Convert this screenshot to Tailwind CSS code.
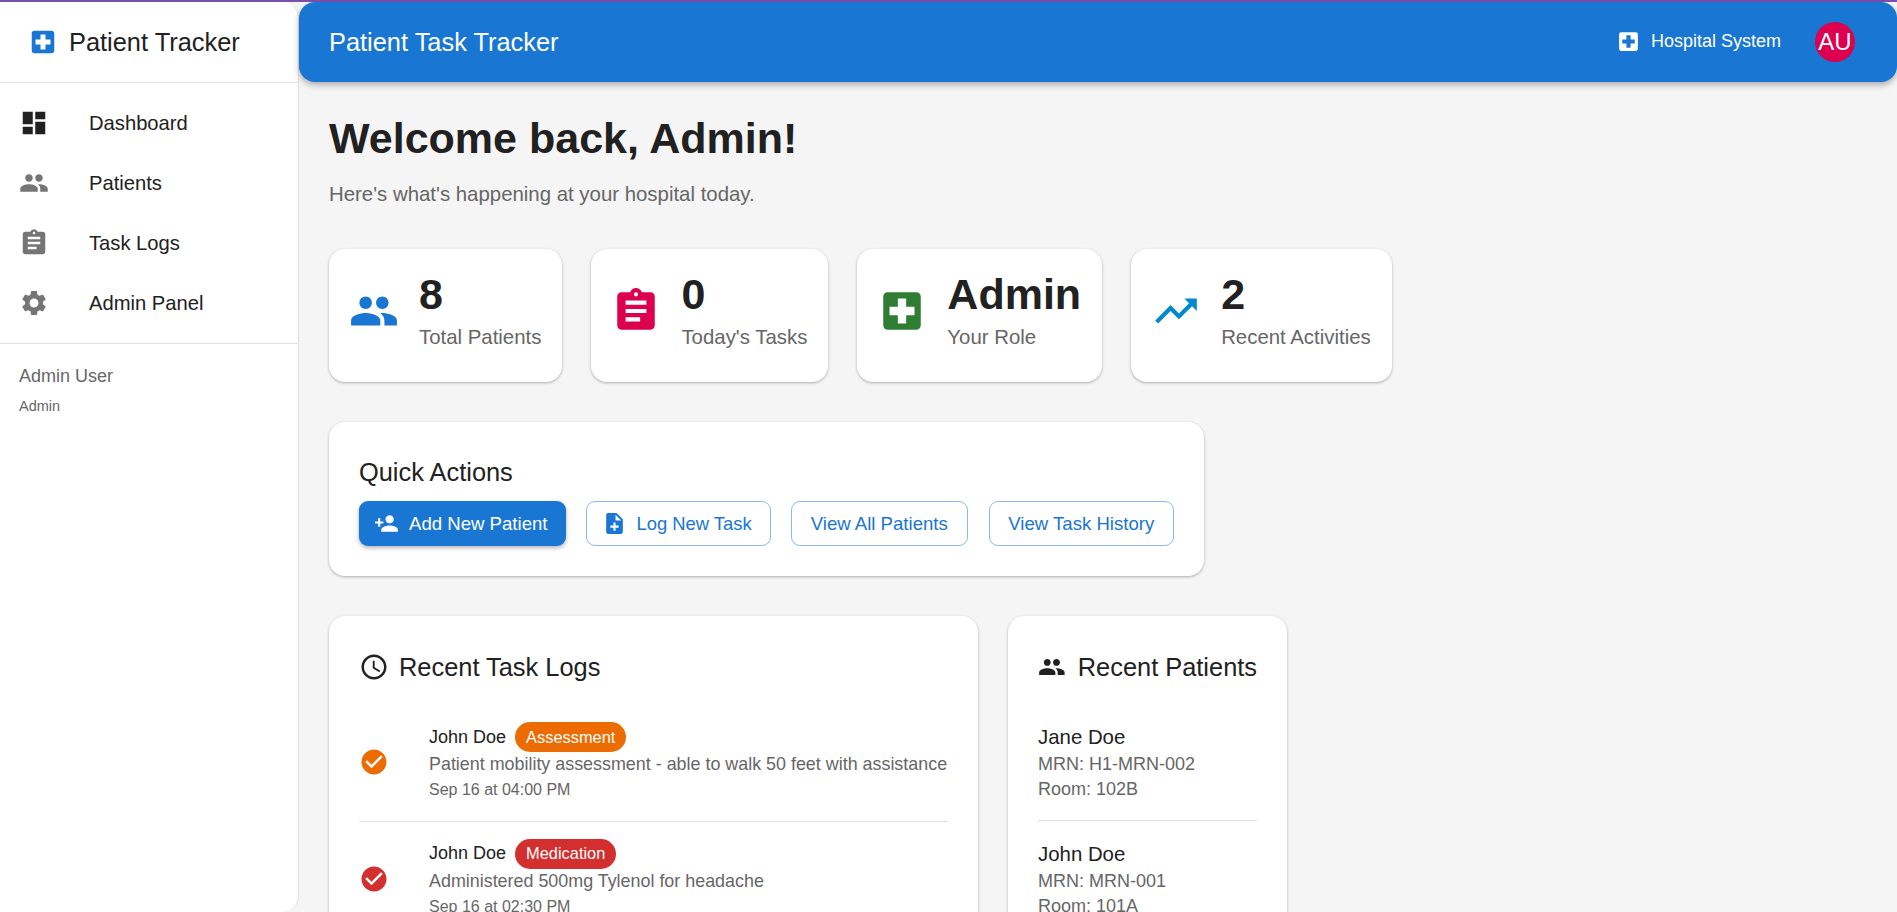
<!DOCTYPE html>
<html lang="en">
<head>
  <meta charset="UTF-8" />
  <title>Patient Task Tracker</title>
  <script src="https://cdn.jsdelivr.net/npm/@tailwindcss/browser@4"></script>
</head>
<body class="h-[912px] overflow-hidden bg-[#f5f5f5] font-['Liberation_Sans',Arial,sans-serif] text-[#212121]">
  <div class="h-[2px] bg-[#7b4fb0]"></div>
  <div class="flex h-[910px]">
    <!-- Sidebar -->
    <aside class="w-[299px] shrink-0 bg-white border-r border-[#e0e0e0] rounded-r-2xl">
      <div class="h-[81px] flex items-center pl-[28px] gap-[11px] border-b border-[#e0e0e0]">
        <svg class="w-[30px] h-[30px] text-[#1976d2]" viewBox="0 0 24 24" fill="currentColor"><path d="M19 3H5c-1.1 0-2 .9-2 2v14c0 1.1.9 2 2 2h14c1.1 0 2-.9 2-2V5c0-1.1-.9-2-2-2zm-1 11h-4v4h-4v-4H6v-4h4V6h4v4h4v4z"/></svg>
        <span class="text-[25.4px]">Patient Tracker</span>
      </div>
      <nav class="py-[10px]">
        <div class="h-[60px] flex items-center pl-[19px]">
          <svg class="w-[30px] h-[30px] text-[#212121]" viewBox="0 0 24 24" fill="currentColor"><path d="M3 13h8V3H3v10zm0 8h8v-6H3v6zm10 0h8V11h-8v10zm0-18v6h8V3h-8z"/></svg>
          <span class="ml-[40px] text-[20.2px]">Dashboard</span>
        </div>
        <div class="h-[60px] flex items-center pl-[19px]">
          <svg class="w-[30px] h-[30px] text-[#757575]" viewBox="0 0 24 24" fill="currentColor"><path d="M16 11c1.66 0 2.99-1.34 2.99-3S17.66 5 16 5s-3 1.34-3 3 1.34 3 3 3zm-8 0c1.66 0 2.99-1.34 2.99-3S9.66 5 8 5 5 6.34 5 8s1.34 3 3 3zm0 2c-2.33 0-7 1.17-7 3.5V19h14v-2.5c0-2.33-4.67-3.5-7-3.5zm8 0c-.29 0-.62.02-.97.05 1.16.84 1.97 1.97 1.97 3.45V19h6v-2.5c0-2.33-4.67-3.5-7-3.5z"/></svg>
          <span class="ml-[40px] text-[20.2px]">Patients</span>
        </div>
        <div class="h-[60px] flex items-center pl-[19px]">
          <svg class="w-[30px] h-[30px] text-[#757575]" viewBox="0 0 24 24" fill="currentColor"><path d="M19 3h-4.18C14.4 1.84 13.3 1 12 1c-1.3 0-2.4.84-2.82 2H5c-1.1 0-2 .9-2 2v14c0 1.1.9 2 2 2h14c1.1 0 2-.9 2-2V5c0-1.1-.9-2-2-2zm-7 0c.55 0 1 .45 1 1s-.45 1-1 1-1-.45-1-1 .45-1 1-1zm2 14H7v-2h7v2zm3-4H7v-2h10v2zm0-4H7V7h10v2z"/></svg>
          <span class="ml-[40px] text-[20.2px]">Task Logs</span>
        </div>
        <div class="h-[60px] flex items-center pl-[19px]">
          <svg class="w-[30px] h-[30px] text-[#757575]" viewBox="0 0 24 24" fill="currentColor"><path d="M19.14 12.94c.04-.3.06-.61.06-.94 0-.32-.02-.64-.07-.94l2.03-1.58c.18-.14.23-.41.12-.61l-1.92-3.32c-.12-.22-.37-.29-.59-.22l-2.39.96c-.5-.38-1.03-.7-1.62-.94l-.36-2.54c-.04-.24-.24-.41-.48-.41h-3.84c-.24 0-.43.17-.47.41l-.36 2.54c-.59.24-1.13.57-1.62.94l-2.39-.96c-.22-.08-.47 0-.59.22L2.74 8.87c-.12.21-.08.47.12.61l2.03 1.58c-.05.3-.09.63-.09.94s.02.64.07.94l-2.03 1.58c-.18.14-.23.41-.12.61l1.92 3.32c.12.22.37.29.59.22l2.39-.96c.5.38 1.03.7 1.62.94l.36 2.54c.05.24.24.41.48.41h3.84c.24 0 .44-.17.47-.41l.36-2.54c.59-.24 1.13-.56 1.62-.94l2.39.96c.22.08.47 0 .59-.22l1.92-3.32c.12-.22.07-.47-.12-.61l-2.01-1.58zM12 15.6c-1.98 0-3.6-1.62-3.6-3.6s1.62-3.6 3.6-3.6 3.6 1.62 3.6 3.6-1.62 3.6-3.6 3.6z"/></svg>
          <span class="ml-[40px] text-[20.2px]">Admin Panel</span>
        </div>
      </nav>
      <div class="border-t border-[#e0e0e0] px-[19px] pt-[21px]">
        <div class="text-[18px] leading-[22px] text-[#666]">Admin User</div>
        <div class="mt-[9px] text-[14.5px] leading-[20px] text-[#666]">Admin</div>
      </div>
    </aside>

    <!-- Main -->
    <div class="flex-1 min-w-0">
      <header class="h-[80px] bg-[#1976d2] rounded-2xl shadow-[0_3px_6px_rgba(0,0,0,0.3)] flex items-center pl-[30px] pr-[42px] text-white">
        <span class="text-[25.4px] flex-1">Patient Task Tracker</span>
        <svg class="w-[25px] h-[25px] mr-[10px] mb-[1px]" viewBox="0 0 24 24" fill="currentColor"><path d="M19 3H5c-1.1 0-2 .9-2 2v14c0 1.1.9 2 2 2h14c1.1 0 2-.9 2-2V5c0-1.1-.9-2-2-2zm-1 11h-4v4h-4v-4H6v-4h4V6h4v4h4v4z"/></svg>
        <span class="text-[18px] mb-[1px]">Hospital System</span>
        <div class="ml-[34px] w-[40px] h-[40px] rounded-full bg-[#dc004e] flex items-center justify-center text-[24px]">AU</div>
      </header>

      <main class="pl-[30px] pt-[30px]">
        <h1 class="text-[43px] leading-[52px] font-bold">Welcome back, Admin!</h1>
        <p class="mt-[16px] text-[20.4px] leading-[28px] text-[#666]">Here's what's happening at your hospital today.</p>

        <!-- Stat cards -->
        <div class="mt-[41px] flex gap-[29px]">
          <div class="h-[133px] bg-white rounded-2xl shadow-[0_1px_3px_rgba(0,0,0,0.3)] flex items-start pl-[20px] pr-[21px]">
            <svg class="mt-[37px] w-[50px] h-[50px] text-[#1976d2]" viewBox="0 0 24 24" fill="currentColor"><path d="M16 11c1.66 0 2.99-1.34 2.99-3S17.66 5 16 5s-3 1.34-3 3 1.34 3 3 3zm-8 0c1.66 0 2.99-1.34 2.99-3S9.66 5 8 5 5 6.34 5 8s1.34 3 3 3zm0 2c-2.33 0-7 1.17-7 3.5V19h14v-2.5c0-2.33-4.67-3.5-7-3.5zm8 0c-.29 0-.62.02-.97.05 1.16.84 1.97 1.97 1.97 3.45V19h6v-2.5c0-2.33-4.67-3.5-7-3.5z"/></svg>
            <div class="ml-[20px] pt-[20px]">
              <div class="text-[43px] leading-[50px] font-bold">8</div>
              <div class="mt-[4px] text-[20.4px] leading-[28px] text-[#666]">Total Patients</div>
            </div>
          </div>
          <div class="h-[133px] bg-white rounded-2xl shadow-[0_1px_3px_rgba(0,0,0,0.3)] flex items-start pl-[20px] pr-[21px]">
            <svg class="mt-[37px] w-[50px] h-[50px] text-[#dc004e]" viewBox="0 0 24 24" fill="currentColor"><path d="M19 3h-4.18C14.4 1.84 13.3 1 12 1c-1.3 0-2.4.84-2.82 2H5c-1.1 0-2 .9-2 2v14c0 1.1.9 2 2 2h14c1.1 0 2-.9 2-2V5c0-1.1-.9-2-2-2zm-7 0c.55 0 1 .45 1 1s-.45 1-1 1-1-.45-1-1 .45-1 1-1zm2 14H7v-2h7v2zm3-4H7v-2h10v2zm0-4H7V7h10v2z"/></svg>
            <div class="ml-[20px] pt-[20px]">
              <div class="text-[43px] leading-[50px] font-bold">0</div>
              <div class="mt-[4px] text-[20.4px] leading-[28px] text-[#666]">Today's Tasks</div>
            </div>
          </div>
          <div class="h-[133px] bg-white rounded-2xl shadow-[0_1px_3px_rgba(0,0,0,0.3)] flex items-start pl-[20px] pr-[21px]">
            <svg class="mt-[37px] w-[50px] h-[50px] text-[#2e7d32]" viewBox="0 0 24 24" fill="currentColor"><path d="M19 3H5c-1.1 0-2 .9-2 2v14c0 1.1.9 2 2 2h14c1.1 0 2-.9 2-2V5c0-1.1-.9-2-2-2zm-1 11h-4v4h-4v-4H6v-4h4V6h4v4h4v4z"/></svg>
            <div class="ml-[20px] pt-[20px]">
              <div class="text-[43px] leading-[50px] font-bold">Admin</div>
              <div class="mt-[4px] text-[20.4px] leading-[28px] text-[#666]">Your Role</div>
            </div>
          </div>
          <div class="h-[133px] bg-white rounded-2xl shadow-[0_1px_3px_rgba(0,0,0,0.3)] flex items-start pl-[20px] pr-[21px]">
            <svg class="mt-[37px] w-[50px] h-[50px] text-[#0288d1]" viewBox="0 0 24 24" fill="currentColor"><path d="M16 6l2.29 2.29-4.88 4.88-4-4L2 16.59 3.41 18l6-6 4 4 6.3-6.29L22 12V6z"/></svg>
            <div class="ml-[20px] pt-[20px]">
              <div class="text-[43px] leading-[50px] font-bold">2</div>
              <div class="mt-[4px] text-[20.4px] leading-[28px] text-[#666]">Recent Activities</div>
            </div>
          </div>
        </div>

        <!-- Quick actions -->
        <div class="mt-[40px] w-[875px] h-[154px] bg-white rounded-2xl shadow-[0_1px_3px_rgba(0,0,0,0.3)] px-[30px] pt-[34px]">
          <h2 class="text-[25.4px] leading-[32px]">Quick Actions</h2>
          <div class="mt-[13px] flex gap-[20px]">
            <button class="h-[45px] w-[208px] pl-[15px] rounded-[9px] bg-[#1976d2] text-white text-[18.6px] flex items-center gap-[10px] shadow-[0_2px_4px_rgba(0,0,0,0.3)]">
              <svg class="w-[25px] h-[25px]" viewBox="0 0 24 24" fill="currentColor"><path d="M15 12c2.21 0 4-1.79 4-4s-1.79-4-4-4-4 1.79-4 4 1.79 4 4 4zm-9-2V7H4v3H1v2h3v3h2v-3h3v-2H6zm9 4c-2.67 0-8 1.34-8 4v2h16v-2c0-2.66-5.33-4-8-4z"/></svg>
              Add New Patient
            </button>
            <button class="h-[45px] w-[185px] pl-[15px] rounded-[9px] border border-[#1976d2]/50 text-[#1976d2] text-[18.4px] flex items-center gap-[9px]">
              <svg class="w-[25px] h-[25px]" viewBox="0 0 24 24" fill="currentColor"><path d="M14 2H6c-1.1 0-1.99.9-1.99 2L4 20c0 1.1.89 2 1.99 2H18c1.1 0 2-.9 2-2V8l-6-6zm2 14h-3v3h-2v-3H8v-2h3v-3h2v3h3v2zm-3-7V3.5L18.5 9H13z"/></svg>
              Log New Task
            </button>
            <button class="h-[45px] w-[177px] rounded-[9px] border border-[#1976d2]/50 text-[#1976d2] text-[18.6px]">View All Patients</button>
            <button class="h-[45px] w-[186px] ml-[1px] rounded-[9px] border border-[#1976d2]/50 text-[#1976d2] text-[18.6px]">View Task History</button>
          </div>
        </div>

        <!-- Recent -->
        <div class="mt-[40px] flex items-start gap-[30px]">
          <div class="w-[649px] h-[400px] bg-white rounded-2xl shadow-[0_1px_3px_rgba(0,0,0,0.3)] px-[30px] pt-[35px]">
            <div class="flex items-center gap-[10px]">
              <svg class="w-[30px] h-[30px]" viewBox="0 0 24 24" fill="currentColor"><path d="M11.99 2C6.47 2 2 6.48 2 12s4.47 10 9.99 10C17.52 22 22 17.52 22 12S17.52 2 11.99 2zM12 20c-4.42 0-8-3.58-8-8s3.58-8 8-8 8 3.58 8 8-3.58 8-8 8zm.5-13H11v6l5.25 3.15.75-1.23-4.5-2.67z"/></svg>
              <h2 class="text-[25.4px] leading-[32px]">Recent Task Logs</h2>
            </div>
            <div class="mt-[21px] flex items-center h-[118px] border-b border-[#e0e0e0] pt-[18px] pb-[19px]">
              <svg class="shrink-0 w-[30px] h-[30px] text-[#ed6c02]" viewBox="0 0 24 24" fill="currentColor"><path d="M12 2C6.48 2 2 6.48 2 12s4.48 10 10 10 10-4.48 10-10S17.52 2 12 2zm-2 15l-5-5 1.41-1.41L10 14.17l7.59-7.59L19 8l-9 9z"/></svg>
              <div class="ml-[40px]">
                <div class="flex items-center gap-[9px]">
                  <span class="text-[18px]">John Doe</span>
                  <span class="h-[30px] px-[11px] rounded-full bg-[#ed6c02] text-white text-[16.4px] flex items-center">Assessment</span>
                </div>
                <div class="text-[17.9px] leading-[24px] text-[#666] whitespace-nowrap">Patient mobility assessment - able to walk 50 feet with assistance</div>
                <div class="mt-[2px] text-[16px] leading-[24px] text-[#666]">Sep 16 at 04:00 PM</div>
              </div>
            </div>
            <div class="flex items-center h-[116px] pt-[16px] pb-[19px]">
              <svg class="shrink-0 w-[30px] h-[30px] text-[#d32f2f]" viewBox="0 0 24 24" fill="currentColor"><path d="M12 2C6.48 2 2 6.48 2 12s4.48 10 10 10 10-4.48 10-10S17.52 2 12 2zm-2 15l-5-5 1.41-1.41L10 14.17l7.59-7.59L19 8l-9 9z"/></svg>
              <div class="ml-[40px]">
                <div class="flex items-center gap-[9px]">
                  <span class="text-[18px]">John Doe</span>
                  <span class="h-[30px] px-[11px] rounded-full bg-[#d32f2f] text-white text-[16.4px] flex items-center">Medication</span>
                </div>
                <div class="text-[17.9px] leading-[24px] text-[#666]">Administered 500mg Tylenol for headache</div>
                <div class="mt-[2px] text-[16px] leading-[24px] text-[#666]">Sep 16 at 02:30 PM</div>
              </div>
            </div>
          </div>
          <div class="w-[279px] h-[400px] bg-white rounded-2xl shadow-[0_1px_3px_rgba(0,0,0,0.3)] px-[30px] pt-[35px]">
            <div class="flex items-center gap-[12px]">
              <svg class="w-[30px] h-[30px]" viewBox="0 0 24 24" fill="currentColor"><path d="M16 11c1.66 0 2.99-1.34 2.99-3S17.66 5 16 5s-3 1.34-3 3 1.34 3 3 3zm-8 0c1.66 0 2.99-1.34 2.99-3S9.66 5 8 5 5 6.34 5 8s1.34 3 3 3zm0 2c-2.33 0-7 1.17-7 3.5V19h14v-2.5c0-2.33-4.67-3.5-7-3.5zm8 0c-.29 0-.62.02-.97.05 1.16.84 1.97 1.97 1.97 3.45V19h6v-2.5c0-2.33-4.67-3.5-7-3.5z"/></svg>
              <h2 class="text-[25.4px] leading-[32px] whitespace-nowrap">Recent Patients</h2>
            </div>
            <div class="mt-[21px] h-[117px] border-b border-[#e0e0e0] pt-[20px]">
              <div class="text-[20.4px] leading-[27px]">Jane Doe</div>
              <div class="text-[18px] leading-[26px] text-[#666]">MRN: H1-MRN-002</div>
              <div class="text-[18px] leading-[25px] text-[#666]">Room: 102B</div>
            </div>
            <div class="pt-[20px]">
              <div class="text-[20.4px] leading-[27px]">John Doe</div>
              <div class="text-[18px] leading-[26px] text-[#666]">MRN: MRN-001</div>
              <div class="text-[18px] leading-[25px] text-[#666]">Room: 101A</div>
            </div>
          </div>
        </div>
      </main>
    </div>
  </div>
</body>
</html>
